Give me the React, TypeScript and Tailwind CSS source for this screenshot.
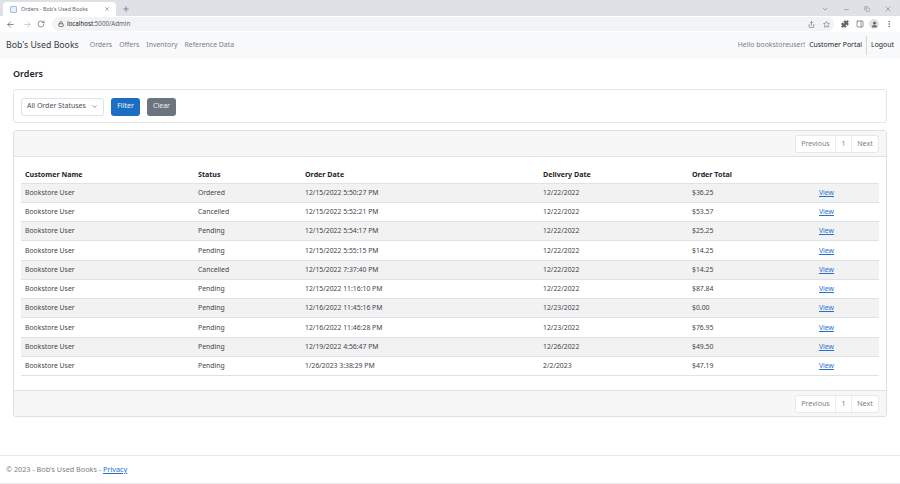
import { ArrowLeft, ArrowRight, ChevronDown, EllipsisVertical, Lock, Minus, Plus, Puzzle, RotateCw, Share, Star, User, X, Copy, PanelRight } from "lucide-react";

const orders = [
  { status: "Ordered", date: "12/15/2022 5:50:27 PM", delivery: "12/22/2022", total: "$36.25" },
  { status: "Cancelled", date: "12/15/2022 5:52:21 PM", delivery: "12/22/2022", total: "$53.57" },
  { status: "Pending", date: "12/15/2022 5:54:17 PM", delivery: "12/22/2022", total: "$25.25" },
  { status: "Pending", date: "12/15/2022 5:55:15 PM", delivery: "12/22/2022", total: "$14.25" },
  { status: "Cancelled", date: "12/15/2022 7:37:40 PM", delivery: "12/22/2022", total: "$14.25" },
  { status: "Pending", date: "12/15/2022 11:16:10 PM", delivery: "12/22/2022", total: "$87.84" },
  { status: "Pending", date: "12/16/2022 11:45:16 PM", delivery: "12/23/2022", total: "$0.00" },
  { status: "Pending", date: "12/16/2022 11:46:28 PM", delivery: "12/23/2022", total: "$76.95" },
  { status: "Pending", date: "12/19/2022 4:56:47 PM", delivery: "12/26/2022", total: "$49.50" },
  { status: "Pending", date: "1/26/2023 3:38:29 PM", delivery: "2/2/2023", total: "$47.19" },
];

function Pager() {
  return (
    <div className="flex h-[18px] w-[84px] rounded-[3px] border border-[#e6e8ea] bg-white text-[7.1px] text-[#7a8187]">
      <span className="flex w-[40px] items-center justify-center border-r border-[#eceef0]">Previous</span>
      <span className="flex w-[16px] items-center justify-center border-r border-[#eceef0]">1</span>
      <span className="flex flex-1 items-center justify-center">Next</span>
    </div>
  );
}

export default function App() {
  return (
    <div className="flex h-[484px] w-[900px] flex-col overflow-hidden bg-white font-['Noto_Sans',sans-serif] text-[7px] text-[#212529]">
      {/* Browser chrome */}
      <div className="flex h-[16px] shrink-0 items-end bg-[#dee1e6] pl-[3px]">
        <div className="flex h-[14px] w-[113px] items-center rounded-t-[4px] bg-white pl-[7px] pr-[6px] text-[5.4px] text-[#5f6368]">
          <span className="mr-[4px] h-[7px] w-[7px] shrink-0 rounded-[1px] border border-[#9cc0ea] bg-[#e8f0fb]" />
          <span className="flex-1 truncate">Orders - Bob's Used Books</span>
          <X size={6} strokeWidth={2} />
        </div>
        <Plus size={8} strokeWidth={2} className="mb-[3px] ml-[6px] text-[#5f6368]" />
        <div className="ml-auto mb-[3px] flex items-center gap-[14px] pr-[8px] text-[#80868b]">
          <ChevronDown size={8} />
          <Minus size={7} />
          <Copy size={6} />
          <X size={8} />
        </div>
      </div>
      <div className="flex h-[16px] shrink-0 items-center bg-white pl-[6px] pr-[7px] text-[#5f6368]">
        <ArrowLeft size={9} strokeWidth={2} />
        <ArrowRight size={9} strokeWidth={2} className="ml-[8px] text-[#bdc1c6]" />
        <RotateCw size={8} strokeWidth={2} className="ml-[5px]" />
        <div className="ml-[7px] flex h-[14px] flex-1 items-center rounded-full bg-[#f1f3f4] pl-[6px] pr-[4px] text-[6.2px]">
          <Lock size={6} strokeWidth={3} className="mr-[3px]" />
          <span className="text-[#202124]">localhost</span>
          <span className="text-[#5f6368]">:5000/Admin</span>
          <Share size={7} className="ml-auto mr-[8px]" />
          <Star size={7} />
        </div>
        <Puzzle size={8} fill="currentColor" className="ml-[7px]" />
        <PanelRight size={8} strokeWidth={2} className="ml-[7px]" />
        <span className="ml-[5px] flex h-[10px] w-[10px] items-center justify-center rounded-full bg-[#dfe1e5]">
          <User size={7} fill="currentColor" />
        </span>
        <EllipsisVertical size={8} strokeWidth={2} className="ml-[6px]" />
      </div>

      {/* Navbar */}
      <nav className="flex h-[27px] shrink-0 items-center bg-[#f8f9fa] pl-[6px] pr-[6px] text-[#7b8085]">
        <span className="mr-[11px] text-[8.75px] text-[#35393d]">Bob's Used Books</span>
        <div className="flex gap-[7px] text-[6.9px]">
          <span>Orders</span>
          <span>Offers</span>
          <span>Inventory</span>
          <span>Reference Data</span>
        </div>
        <div className="ml-auto flex h-[19px] items-center text-[6.9px] text-[#212529]">
          <span className="mr-[4px] text-[#7b8085]">Hello bookstoreuser!</span>
          <span className="pr-[4px]">Customer Portal</span>
          <span className="flex h-full items-center border-l border-[#d5d7d9] pl-[4px]">Logout</span>
        </div>
      </nav>

      {/* Content */}
      <main className="flex-1 px-[13px]">
        <h1 className="mt-[8px] h-[14px] text-[9px] font-semibold leading-[14px] text-[#212529]">Orders</h1>
        <section className="mt-[8px] flex h-[34px] items-center gap-[7px] rounded-[3px] border border-[#e3e4e5] px-[7px] pt-[1px]">
          <div className="flex h-[18px] w-[83px] items-center justify-between rounded-[3px] border border-[#dfe2e5] pl-[5px] pr-[5px] text-[#495057]">
            All Order Statuses
            <ChevronDown size={7} strokeWidth={2} />
          </div>
          <button className="h-[18px] w-[29px] rounded-[3px] bg-[#1b6ec2] text-[#f2f6fb]">Filter</button>
          <button className="h-[18px] w-[29px] rounded-[3px] bg-[#6c757d] text-[#eceef0]">Clear</button>
        </section>

        <section className="mt-[7px] rounded-[3px] border border-[#dfe0e1]">
          <div className="flex h-[26px] items-center justify-end border-b border-[#dfe0e1] bg-[#f7f7f7] pr-[7px]">
            <Pager />
          </div>
          <div className="px-[7px] pb-[14px] pt-[9px]">
            <table className="w-full table-fixed border-collapse">
              <colgroup>
                <col className="w-[173px]" />
                <col className="w-[107px]" />
                <col className="w-[238px]" />
                <col className="w-[149px]" />
                <col className="w-[127px]" />
                <col />
              </colgroup>
              <thead>
                <tr className="h-[17px] text-left text-[7.1px] text-[#212529]">
                  <th className="px-[4px] font-bold">Customer Name</th>
                  <th className="px-[4px] font-bold">Status</th>
                  <th className="px-[4px] font-bold">Order Date</th>
                  <th className="px-[4px] font-bold">Delivery Date</th>
                  <th className="px-[4px] font-bold">Order Total</th>
                  <th />
                </tr>
              </thead>
              <tbody className="text-[6.85px] text-[#3f4449]">
                {orders.map((o, i) => (
                  <tr key={i} className={`h-[19.25px] border-t border-[#dee2e6] last:border-b ${i % 2 === 0 ? "bg-[#f2f2f2]" : "bg-white"}`}>
                    <td className="px-[4px] pt-[1px]">Bookstore User</td>
                    <td className="px-[4px] pt-[1px]">{o.status}</td>
                    <td className="px-[4px] pt-[1px]">{o.date}</td>
                    <td className="px-[4px] pt-[1px]">{o.delivery}</td>
                    <td className="px-[4px] pt-[1px]">{o.total}</td>
                    <td className="px-[4px] pt-[1px] text-[#2470d0] underline">View</td>
                  </tr>
                ))}
              </tbody>
            </table>
          </div>
          <div className="flex h-[26px] items-center justify-end border-t border-[#dfe0e1] bg-[#f7f7f7] pr-[7px]">
            <Pager />
          </div>
        </section>
      </main>

      {/* Footer */}
      <footer className="flex h-[29px] shrink-0 items-center border-t border-b border-[#e9eaeb] pl-[6px] text-[7.25px] text-[#7b8085]">
        © 2023 - Bob's Used Books -&nbsp;<span className="text-[#2470d0] underline">Privacy</span>
      </footer>
    </div>
  );
}
